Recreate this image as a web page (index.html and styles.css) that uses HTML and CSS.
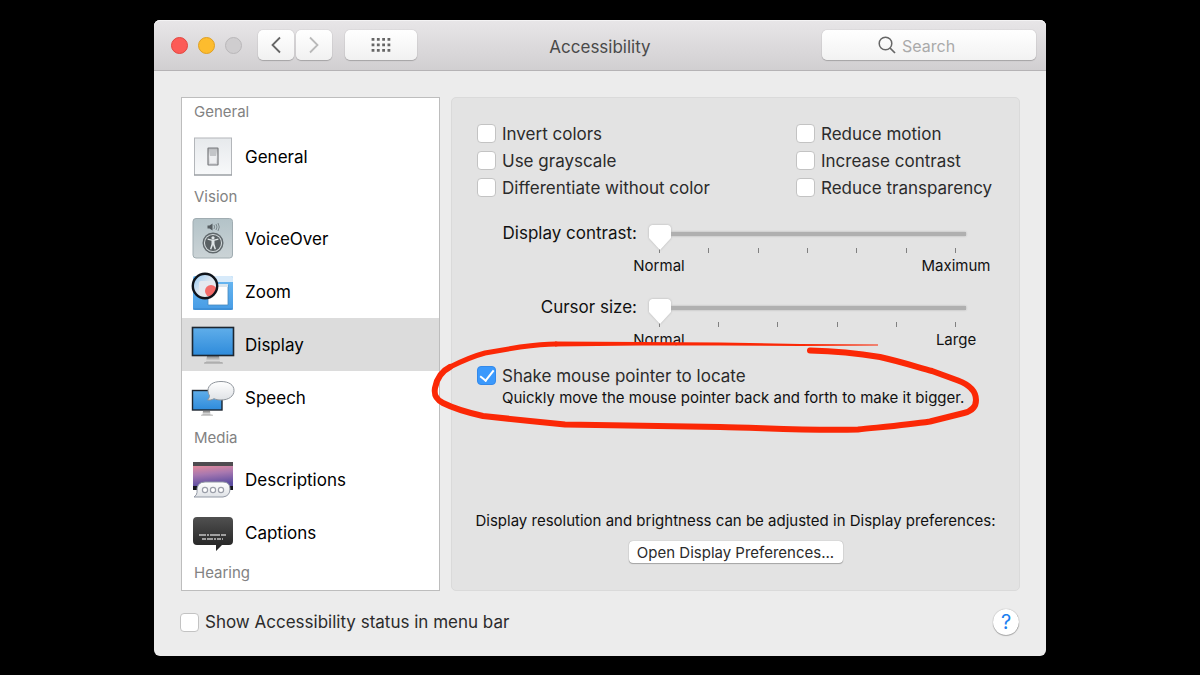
FILE: index.html
```
<!DOCTYPE html>
<html lang="en">
<head>
    <meta charset="UTF-8">
    <meta name="viewport" content="width=device-width, initial-scale=1.0">
    <title>Accessibility</title>
    <link rel="stylesheet" href="styles.css">
</head>
<body>
    <div class="window">
        <header class="titlebar">
            <div class="lights">
                <button class="light close" aria-label="Close"></button>
                <button class="light minimize" aria-label="Minimize"></button>
                <button class="light zoom" aria-label="Zoom" disabled></button>
            </div>
            <div class="history">
                <button class="tool" aria-label="Back">
                    <svg width="12" height="18" viewBox="0 0 12 18"><path d="M10 1.5 2.500 9l7.500 7.500" fill="none" stroke="#666" stroke-width="1.800"/></svg>
                </button>
                <button class="tool" aria-label="Forward" disabled>
                    <svg width="12" height="18" viewBox="0 0 12 18"><path d="M2 1.500 9.500 9 2 16.500" fill="none" stroke="#b9b9b9" stroke-width="1.800"/></svg>
                </button>
            </div>
            <button class="tool all" aria-label="Show all">
                <svg width="20" height="14" viewBox="0 0 20 14"><path d="M2 0v14M7.300 0v14M12.600 0v14M17.900 0v14" fill="none" stroke="#666" stroke-width="2.800" stroke-dasharray="2.800 2.700"/></svg>
            </button>
            <h1>Accessibility</h1>
            <label class="search">
                <svg width="18" height="18" viewBox="0 0 18 18"><circle cx="7.500" cy="7.500" r="6.300" fill="none" stroke="#666" stroke-width="1.500"/><path d="m12 12 5 5" stroke="#666" stroke-width="1.700"/></svg>
                <input type="text" placeholder="Search" aria-label="Search">
            </label>
        </header>

        <main class="content">
            <nav class="sidebar">
                <h2>General</h2>
                <a href="#general">
                    <svg class="icon" viewBox="0 0 44 44">
                        <defs>
                            <linearGradient id="plate" x2="0" y2="1"><stop stop-color="#e6e9ec"/><stop offset="1" stop-color="#f8f9fa"/></linearGradient>
                            <linearGradient id="rocker" x2="0" y2="1"><stop stop-color="#b4b6b9"/><stop offset=".5" stop-color="#e8e9eb"/><stop offset="1" stop-color="#d5d6d9"/></linearGradient>
                        </defs>
                        <rect x="3.500" y="3" width="37" height="37" fill="url(#plate)" stroke="#b3b6ba"/>
                        <path d="M3 40h38" stroke="#8f9499"/>
                        <rect x="17" y="13" width="10" height="17" rx=".5" fill="url(#rocker)" stroke="#77797c" stroke-width="1.200"/>
                        <path d="M19 15h6v6h-6z" fill="#c3c5c8"/><path d="M19 21h6v7h-6z" fill="#eeeff1"/>
                    </svg>
                    General
                </a>
                <h2>Vision</h2>
                <a href="#voiceover">
                    <svg class="icon" viewBox="0 0 44 44">
                        <defs><linearGradient id="voice" x2="0" y2="1"><stop stop-color="#b3c3c8"/><stop offset="1" stop-color="#cbd3d6"/></linearGradient></defs>
                        <rect x="2" y="1.500" width="39.500" height="39.500" rx="3" fill="url(#voice)" stroke="#a0acb1"/>
                        <path d="M16.500 8.500h2l3-2v7l-3-2h-2z" fill="#555d61"/>
                        <path d="M23 8q1.300 2 0 4M25 7q2 3 0 6M27 6q2.600 4 0 8" fill="none" stroke="#6d777b" stroke-width=".8"/>
                        <circle cx="22" cy="26" r="9.800" fill="#d3dadc" stroke="#60686c" stroke-width="1.400"/>
                        <circle cx="22" cy="26" r="8" fill="#596063"/>
                        <circle cx="22" cy="20.800" r="1.600" fill="#dfe5e7"/>
                        <path d="m16.500 22.700 4 1v3.300l-1.500 5 1.300.4L22 28l1.700 4.400 1.300-.4-1.500-5v-3.300l4-1-.3-1.100-4.200.8h-2l-4.200-.8z" fill="#dfe5e7"/>
                    </svg>
                    VoiceOver
                </a>
                <a href="#zoom">
                    <svg class="icon" viewBox="0 0 44 44">
                        <defs>
                            <linearGradient id="desk" x2="0" y2="1"><stop stop-color="#6bb9f2"/><stop offset="1" stop-color="#479ce5"/></linearGradient>
                            <linearGradient id="lens" x2="1" y2="1"><stop stop-color="#8fc7f4"/><stop offset=".45" stop-color="#d7e3ef"/><stop offset="1" stop-color="#fff"/></linearGradient>
                            <clipPath id="glass"><circle cx="14" cy="16" r="12"/></clipPath>
                        </defs>
                        <rect x="2" y="6" width="40" height="34" rx="2" fill="url(#desk)"/>
                        <path d="M14 6h26q2 0 2 2v4H14z" fill="#d7eafa"/>
                        <path d="M2 39h40" stroke="#3683c9"/>
                        <path d="M17 15h20v20H17z" fill="#fff" stroke="#4788bd" stroke-width=".8"/>
                        <path d="M24 14h13v3H24z" fill="#d9e5ee"/>
                        <circle cx="14" cy="16" r="12" fill="url(#lens)"/>
                        <g clip-path="url(#glass)"><path d="M8 13q0-2 2-2h18v18H8z" fill="#e5e9ef"/><circle cx="20" cy="21" r="6" fill="#f36b69"/></g>
                        <circle cx="14" cy="16" r="12.200" fill="none" stroke="#10141b" stroke-width="2.400"/>
                    </svg>
                    Zoom
                </a>
                <a href="#display" class="selected">
                    <svg class="icon" viewBox="0 0 44 44">
                        <defs>
                            <linearGradient id="screen" x2="0" y2="1"><stop stop-color="#60aeea"/><stop offset="1" stop-color="#2e8bdb"/></linearGradient>
                            <linearGradient id="stand" x2="0" y2="1"><stop stop-color="#858585"/><stop offset=".6" stop-color="#d8d8d8"/><stop offset="1" stop-color="#999"/></linearGradient>
                        </defs>
                        <path d="M16 33h12l1 6h2q1 0 1 1.500H13q0-1.500 1-1.500h1z" fill="url(#stand)"/>
                        <rect x="1.500" y="4.500" width="41" height="28" fill="url(#screen)" stroke="#1d2630" stroke-width="1.600"/>
                    </svg>
                    Display
                </a>
                <a href="#speech">
                    <svg class="icon" viewBox="0 0 44 44">
                        <defs><linearGradient id="bubble" x2="0" y2="1"><stop stop-color="#fff"/><stop offset="1" stop-color="#dfe2e6"/></linearGradient></defs>
                        <path d="M12 35h7l.5 3.500h1.500q1 0 1 1H10q0-1 1-1h.5z" fill="url(#stand)"/>
                        <rect x="1.500" y="14.500" width="29.500" height="19.500" fill="url(#screen)" stroke="#1d2630" stroke-width="1.400"/>
                        <path d="M30 5.500c8 0 13 3.500 13 9s-5 9.500-13 9.500c-3 0-5-.5-7-1.300-2 1.200-4.500 1.600-6.500 1.300 1.500-1.500 2-3 2-4.500-1-1.500-1.500-3-1.500-5 0-5.500 5-9 13-9z" fill="url(#bubble)" stroke="#8e949b"/>
                    </svg>
                    Speech
                </a>
                <h2>Media</h2>
                <a href="#descriptions">
                    <svg class="icon" viewBox="0 0 44 44">
                        <defs><linearGradient id="movie" x2=".2" y2="1"><stop stop-color="#e28b9c"/><stop offset=".45" stop-color="#a878b0"/><stop offset="1" stop-color="#5c4da0"/></linearGradient></defs>
                        <path d="M2 4h40v28H2z" fill="#14151c"/>
                        <path d="M2 4h40v4H2z" fill="#4e4b4f"/>
                        <path d="M2 8h40v20H2z" fill="url(#movie)"/>
                        <path d="M14 24h18q7 0 7 7t-7 8H13q-5 0-10 0 3-2 3-4.500Q5 24 14 24z" fill="url(#bubble)" stroke="#9298a4"/>
                        <g fill="#fff" stroke="#9b9fa9" stroke-width="1.200"><circle cx="14" cy="32" r="2.600"/><circle cx="22" cy="32" r="2.600"/><circle cx="30" cy="32" r="2.600"/></g>
                    </svg>
                    Descriptions
                </a>
                <a href="#captions">
                    <svg class="icon" viewBox="0 0 44 44">
                        <defs><linearGradient id="caption" x2="0" y2="1"><stop stop-color="#505050"/><stop offset="1" stop-color="#202020"/></linearGradient></defs>
                        <path d="M6 6h32q4 0 4 4v20q0 4-4 4h-7l-6 6v-6H6q-4 0-4-4V10q0-4 4-4z" fill="url(#caption)"/>
                        <path d="M8 24h27" stroke="#c4c4c4" stroke-width="1.500" stroke-dasharray="7 1 2 1 10 1"/>
                        <path d="M11 28h21" stroke="#c4c4c4" stroke-width="1.500" stroke-dasharray="4 1 6 1 2 1"/>
                    </svg>
                    Captions
                </a>
                <h2>Hearing</h2>
            </nav>

            <section class="panel">
                <div class="options">
                    <label class="check"><input type="checkbox">Invert colors</label>
                    <label class="check"><input type="checkbox">Reduce motion</label>
                    <label class="check"><input type="checkbox">Use grayscale</label>
                    <label class="check"><input type="checkbox">Increase contrast</label>
                    <label class="check"><input type="checkbox">Differentiate without color</label>
                    <label class="check"><input type="checkbox">Reduce transparency</label>
                </div>

                <div class="setting">
                    <label for="contrast">Display contrast:</label>
                    <div class="slider">
                        <input type="range" id="contrast" min="0" max="6" value="0">
                        <div class="ticks"><i></i><i></i><i></i><i></i><i></i><i></i><i></i></div>
                        <div class="scale"><span>Normal</span><span>Maximum</span></div>
                    </div>
                </div>
                <div class="setting">
                    <label for="cursor">Cursor size:</label>
                    <div class="slider">
                        <input type="range" id="cursor" min="0" max="5" value="0">
                        <div class="ticks"><i></i><i></i><i></i><i></i><i></i><i></i></div>
                        <div class="scale"><span>Normal</span><span>Large</span></div>
                    </div>
                </div>

                <div class="shake">
                    <label class="check"><input type="checkbox" checked>Shake mouse pointer to locate</label>
                    <p>Quickly move the mouse pointer back and forth to make it bigger.</p>
                </div>

                <div class="more">
                    <p>Display resolution and brightness can be adjusted in Display preferences:</p>
                    <button class="open">Open Display Preferences...</button>
                </div>

                <!-- hand-drawn circle around the shake option -->
                <svg class="marker" width="560" height="105" viewBox="430 335 560 105" fill="none" stroke="#fb2806" stroke-linecap="round" stroke-linejoin="round">
                    <path stroke-width="6" d="M810 350.500C832 351 856 353 880 357C898 361 914 366 932 371L958 380.500C970 385 976 392 976 400C976 407 972 411 964 413L930 421.500C907 425 882 427 858 429.500C812 431 766 428 720 427L565 424.500L530 421L483 416C465 412 453 408 443 403C435 399 434 394 435 388C437 377 442 371 450 367"/>
                    <path stroke-width="5" d="M450 367C462 361 470 357 485 353L520 347C535 345 545 344 556 344"/>
                    <path fill="#fb2806" stroke="none" d="M555 341.500L640 342L720 342.500L800 344L878 344.500V345.500L800 346L720 345.500L640 345.500L555 346.500z"/>
                </svg>
            </section>
        </main>

        <footer class="bottom">
            <label class="check"><input type="checkbox">Show Accessibility status in menu bar</label>
            <button class="help" aria-label="Help">?</button>
        </footer>
    </div>
</body>
</html>
```
FILE: styles.css
```
* {
    box-sizing: border-box;
}
body {
    margin: 0;
    padding: 20px;
    background: #000;
    font-family: Inter, "Liberation Sans", sans-serif;
    font-size: 17px;
    color: #111;
}
h1, h2, p {
    margin: 0;
    font-weight: normal;
}
button, input {
    font: inherit;
    margin: 0;
}
button {
    padding: 0;
    border: none;
}
.window {
    max-width: 892px;
    margin: 0 auto;
    background: #ececec;
    border-radius: 6px;
}

/* title bar */
.titlebar {
    position: relative;
    display: flex;
    align-items: center;
    height: 51px;
    padding: 0 10px 0 17px;
    background: linear-gradient(#e8e6e8, #d1cfd1);
    border-bottom: 1px solid #b5b3b5;
    border-radius: 6px 6px 0 0;
    box-shadow: inset 0 1px #f4f3f4;
}
.lights {
    display: flex;
    gap: 10px;
}
.light {
    width: 17px;
    height: 17px;
    border-radius: 50%;
}
.close {
    background: #fc5b57;
    border: 1px solid #e2463f;
}
.minimize {
    background: #fdbc2e;
    border: 1px solid #dfa023;
}
.zoom {
    background: #cfcdcf;
    border: 1px solid #b9b7b9;
}
.history {
    display: flex;
    gap: 2px;
    margin: 0 13px 0 16px;
}
.tool {
    display: flex;
    align-items: center;
    justify-content: center;
    width: 36px;
    height: 30px;
    background: linear-gradient(#fff, #f1f1f1);
    border-radius: 5px;
    box-shadow: 0 0 1px rgba(0, 0, 0, 0.3), 0 1px 1px rgba(0, 0, 0, 0.2);
}
.all {
    width: 72px;
}
h1 {
    position: absolute;
    left: 0;
    right: 0;
    padding-top: 3px;
    text-align: center;
    font-size: 17px;
    line-height: 20px;
    color: #4a4a4a;
    pointer-events: none;
}
.search {
    display: flex;
    align-items: center;
    justify-content: center;
    gap: 6px;
    width: 214px;
    height: 30px;
    margin-left: auto;
    background: linear-gradient(#fff, #f2f2f2);
    border-radius: 5px;
    box-shadow: 0 0 1px rgba(0, 0, 0, 0.3), 0 1px 1px rgba(0, 0, 0, 0.2);
    font-size: 16px;
}
.search input {
    width: 78px;
    padding: 2px 0 0;
    border: none;
    background: none;
    outline: none;
}
.search input::placeholder {
    color: #aaa;
}

/* sidebar */
.content {
    display: grid;
    grid-template-columns: 259px 1fr;
    gap: 11px;
    padding: 26px 26px 0 27px;
}
.sidebar {
    padding-bottom: 2px;
    background: #fff;
    border: 1px solid #bdbdbd;
}
.sidebar h2 {
    height: 29px;
    padding: 4px 12px 0;
    font-size: 15px;
    line-height: 20px;
    color: #828282;
}
.sidebar h2:first-child {
    height: 32px;
}
.sidebar a {
    display: flex;
    align-items: center;
    gap: 10px;
    height: 53px;
    padding-left: 9px;
    color: #000;
    text-decoration: none;
}
.sidebar .selected {
    background: #dcdcdc;
}
.icon {
    width: 44px;
    height: 44px;
}

/* settings panel */
.panel {
    position: relative;
    display: flex;
    flex-direction: column;
    padding: 22px 25px 27px;
    background: #e3e3e3;
    border: 1px solid #dadada;
    border-radius: 5px;
}
.options {
    display: grid;
    grid-template-columns: 1fr 198px;
    margin-bottom: 1px;
}
.check {
    display: flex;
    align-items: center;
    gap: 6px;
    height: 27px;
    color: #2b2b2b;
    white-space: nowrap;
}
.check input {
    appearance: none;
    display: grid;
    place-items: center;
    width: 19px;
    height: 19px;
    background: #fff;
    border: 1px solid #c3c3c3;
    border-radius: 4px;
}
.check input:checked {
    background: #3b99fc;
    border-color: #3389ea;
}
.check input:checked::before {
    content: "";
    width: 6px;
    height: 12px;
    margin-bottom: 3px;
    border: solid #fff;
    border-width: 0 2px 2px 0;
    transform: rotate(38deg);
}
.setting {
    display: grid;
    grid-template-columns: 160px 1fr;
    gap: 12px;
    margin-top: 18px;
    padding-right: 28px;
}
.setting label {
    padding-top: 3px;
    line-height: 20px;
    text-align: right;
}
.slider input {
    appearance: none;
    display: block;
    width: 100%;
    height: 28px;
    background: linear-gradient(#b0b0b0, #b0b0b0) center / 100% 4px no-repeat;
    filter: drop-shadow(0 0 1px rgba(0, 0, 0, 0.2));
}
.slider input::-webkit-slider-thumb {
    appearance: none;
    width: 22px;
    height: 25px;
    margin-top: 7px;
    background: #fff;
    clip-path: polygon(0 3px, 1px 1px, 3px 0, 19px 0, 21px 1px, 22px 3px, 22px 13px, 11px 25px, 0 13px);
}
.ticks {
    display: flex;
    justify-content: space-between;
    margin: 0 10px;
}
.ticks i {
    width: 1px;
    height: 5px;
    background: #808080;
}
.scale {
    display: flex;
    justify-content: space-between;
    margin: 3px -30px 0;
    font-size: 15px;
    line-height: 20px;
    text-align: center;
}
.scale span {
    width: 80px;
}
.shake {
    margin-top: 12px;
}
.shake p {
    padding-left: 25px;
    font-size: 15px;
    line-height: 18px;
    white-space: nowrap;
}
.more {
    margin-top: auto;
    text-align: center;
    font-size: 15px;
    white-space: nowrap;
}
.more p {
    margin: 0 -10px;
    line-height: 20px;
}
.open {
    width: 214px;
    height: 22px;
    margin-top: 10px;
    background: #fff;
    border-radius: 4px;
    box-shadow: 0 0 1px rgba(0, 0, 0, 0.4), 0 1px 1px rgba(0, 0, 0, 0.25);
    color: #2b2b2b;
}
.marker {
    position: absolute;
    left: -22px;
    top: 237px;
    pointer-events: none;
}

/* bottom row */
.bottom {
    display: flex;
    align-items: center;
    justify-content: space-between;
    height: 65px;
    padding: 0 27px 3px 26px;
}
.help {
    width: 26px;
    height: 26px;
    background: #fff;
    border-radius: 50%;
    box-shadow: 0 0 1px rgba(0, 0, 0, 0.4), 0 1px 1px rgba(0, 0, 0, 0.25);
    font-size: 20px;
    line-height: 26px;
    color: #1c7ff0;
}
```
